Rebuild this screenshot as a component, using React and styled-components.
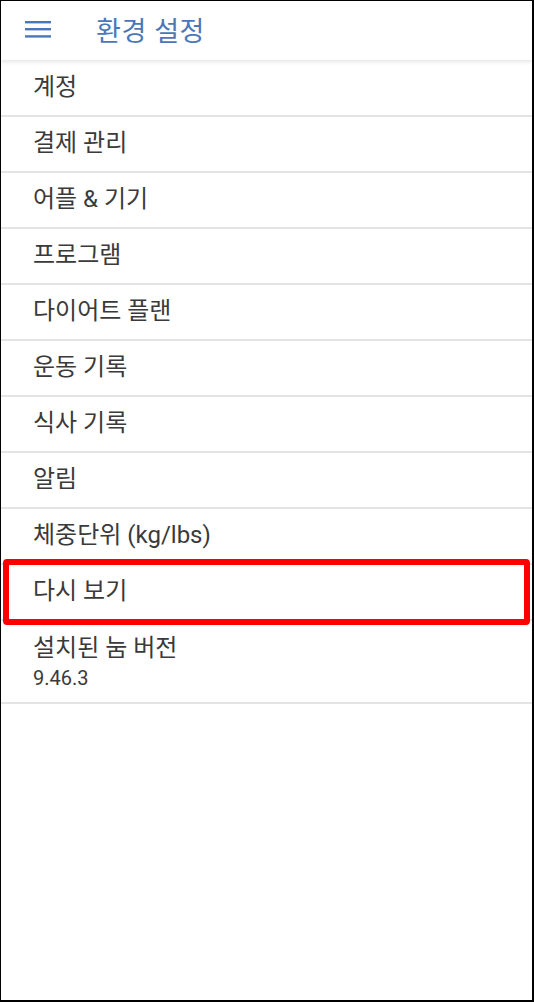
import React from "react";
import styled, { createGlobalStyle } from "styled-components";

const GlobalStyle = createGlobalStyle`
  html, body {
    margin: 0;
    padding: 0;
    background: #fff;
  }
  body {
    font-family: Roboto, "Noto Sans CJK KR", sans-serif;
  }
`;

const items = [
  "계정",
  "결제 관리",
  "어플 & 기기",
  "프로그램",
  "다이어트 플랜",
  "운동 기록",
  "식사 기록",
  "알림",
  "체중단위 (kg/lbs)",
  { label: "다시 보기", marked: true },
  { label: "설치된 눔 버전", sub: "9.46.3" },
];

const App = () => {
  return (
    <Frame>
      <GlobalStyle />
      <Header>
        <MenuButton aria-label="menu">
          <svg width="26" height="18" viewBox="0 0 26 18">
            <rect x="0" y="1" width="26" height="2.4" fill="#4a78b6" />
            <rect x="0" y="8" width="26" height="2.4" fill="#4a78b6" />
            <rect x="0" y="15.2" width="26" height="2.4" fill="#4a78b6" />
          </svg>
        </MenuButton>
        <Title>환경 설정</Title>
      </Header>
      <List>
        {items.map((it, i) => {
          const item = typeof it === "string" ? { label: it } : it;
          return (
            <Row key={i} $tall={!!item.sub}>
              <Label>{item.label}</Label>
              {item.sub && <Sub>{item.sub}</Sub>}
              {item.marked && <Highlight />}
            </Row>
          );
        })}
      </List>
    </Frame>
  );
};

const Frame = styled.div`
  width: 534px;
  height: 1002px;
  box-sizing: border-box;
  border-style: solid;
  border-color: #000;
  border-width: 1px 2px 2px 1px;
  background: #fff;
  overflow: hidden;
  display: flex;
  flex-direction: column;
`;

const Header = styled.div`
  height: 59px;
  flex-shrink: 0;
  display: flex;
  align-items: center;
  box-shadow: 0 2px 4px rgba(0, 0, 0, 0.1);
  position: relative;
  z-index: 1;
`;

const MenuButton = styled.div`
  width: 26px;
  height: 18px;
  margin-left: 24px;
  margin-bottom: 3px;
  display: flex;
`;

const Title = styled.div`
  margin-left: 45px;
  margin-bottom: 2px;
  font-size: 27px;
  color: #4a78b6;
  letter-spacing: 0.6px;
`;

const List = styled.div`
  display: flex;
  flex-direction: column;
`;

const Row = styled.div`
  position: relative;
  height: ${(p) => (p.$tall ? "82px" : "55px")};
  border-bottom: 2px solid #e4e4e4;
  padding-left: 32px;
  display: flex;
  flex-direction: column;
  justify-content: center;
  box-sizing: content-box;
  margin-top: -1px;
  &:first-child {
    margin-top: 0;
  }
`;

const Label = styled.div`
  font-size: 24px;
  color: #3a3a3a;
  line-height: 30px;
  padding-bottom: 1px;
`;

const Sub = styled.div`
  font-size: 20px;
  color: #3a3a3a;
  line-height: 24px;
  margin-top: 2px;
`;

const Highlight = styled.div`
  position: absolute;
  top: -5px;
  bottom: -6px;
  left: 2px;
  right: 2px;
  border: 6px solid #ff0000;
  border-radius: 4px;
  z-index: 2;
`;

export default App;
